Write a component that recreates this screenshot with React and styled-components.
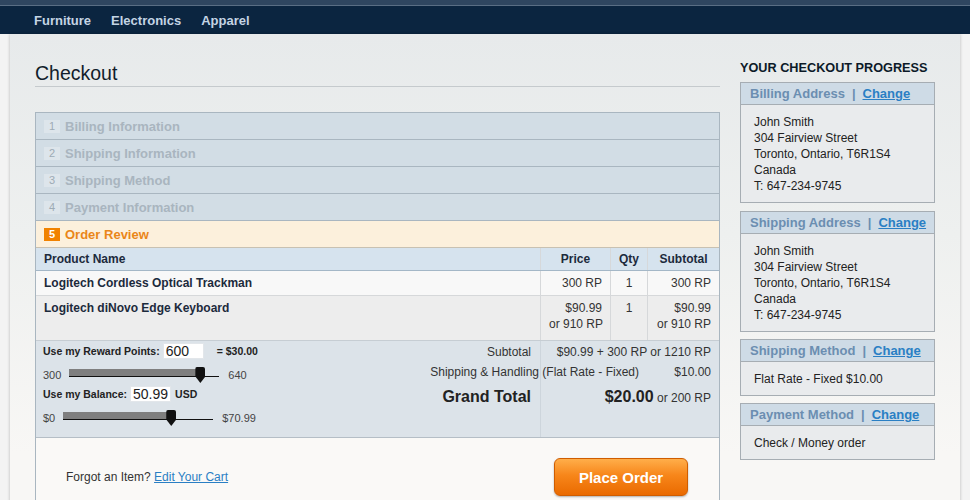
import styled, { createGlobalStyle } from "styled-components";

const GlobalStyle = createGlobalStyle`
  body {
    margin: 0;
    background: #f3f3f3;
    font-family: "Liberation Sans", Arial, sans-serif;
  }
`;

const TopStrip = styled.div`
  height: 5px;
  background: #2f4660;
  border-bottom: 1px solid #5a6e84;
`;

const NavBar = styled.div`
  background: #0b2540;
`;

const NavInner = styled.nav`
  width: 926px;
  height: 28px;
  margin: 0 auto;
  padding-left: 24px;
  display: flex;
  align-items: center;
  gap: 20px;
`;

const NavLink = styled.a`
  color: #c4d4e4;
  font-size: 13px;
  font-weight: bold;
  text-decoration: none;
`;

const Page = styled.div`
  width: 900px;
  min-height: 466px;
  margin: 0 auto;
  padding: 0 25px;
  display: flex;
  gap: 20px;
  background: linear-gradient(to bottom, #e7eaeb 0, #eef0ef 200px, #f8f7f5 420px);
  box-shadow: 0 0 3px rgba(0, 0, 0, 0.25);
`;

const Main = styled.div`
  width: 685px;
`;

const Title = styled.h1`
  margin: 27px 0 0;
  padding-bottom: 1px;
  font-size: 19.5px;
  line-height: 24px;
  font-weight: normal;
  color: #111d2b;
  border-bottom: 1px solid #c5cacd;
`;

const Steps = styled.div`
  margin-top: 25px;
  border: 1px solid #a9b6c0;
`;

const Step = styled.div`
  height: 26px;
  display: flex;
  align-items: center;
  gap: 5px;
  padding-left: 8px;
  background: ${(p) => (p.$active ? "#fcf0dc" : "#d2dde5")};
  border-bottom: 1px solid ${(p) => (p.$active ? "#c8c1b2" : "#a9b6c0")};
  font-size: 13px;
  font-weight: bold;
  color: ${(p) => (p.$active ? "#ea8618" : "#a9b5bf")};
`;

const StepNum = styled.span`
  width: 16px;
  height: 13px;
  display: flex;
  align-items: center;
  justify-content: center;
  font-size: 11px;
  font-weight: ${(p) => (p.$active ? "bold" : "normal")};
  background: ${(p) => (p.$active ? "#f18200" : "#dde5eb")};
  color: ${(p) => (p.$active ? "#fff" : "#9eabb5")};
`;

const Row = styled.div`
  display: grid;
  grid-template-columns: 1fr 70px 37px 72px;
  background: ${(p) => p.$bg};
  border-bottom: 1px solid ${(p) => p.$line};
  font-size: 12px;
  line-height: 16px;
`;

const Cell = styled.div`
  padding: ${(p) => (p.$tall ? "4px 8px 8px" : p.$head ? "3px 8px" : "4px 8px")};
  text-align: ${(p) => p.$align || "left"};
  white-space: nowrap;
  font-weight: ${(p) => (p.$bold ? "bold" : "normal")};
  color: ${(p) => (p.$bold ? "#1c2a3c" : "#333")};
  & + & {
    border-left: 1px solid ${(p) => (p.$head ? "#c2d1de" : "#d6d8da")};
  }
`;

const Totals = styled.div`
  height: 96px;
  display: flex;
  border-bottom: 1px solid #b5bec6;
  background: linear-gradient(
      to right,
      transparent 504px,
      #cdd5dc 504px,
      #cdd5dc 505px,
      transparent 505px
    ),
    #dce3e9;
`;

const Controls = styled.div`
  width: 373px;
  padding: 1px 0 0 7px;
`;

const ControlRow = styled.div`
  height: 18px;
  display: flex;
  align-items: center;
  margin-top: ${(p) => p.$mt || 0}px;
  font-size: 10.5px;
  font-weight: bold;
  color: #222;
`;

const Field = styled.input`
  box-sizing: border-box;
  width: 41px;
  height: 16px;
  margin-left: 3px;
  padding: 0 1px 0 2px;
  border: 1px solid #e2e6ea;
  background: #fff;
  font-family: inherit;
  font-size: 14px;
  color: #222;
  outline: none;
`;

const Suffix = styled.span`
  margin-left: ${(p) => p.$gap}px;
`;

const SliderLabel = styled.span`
  font-size: 11px;
  font-weight: normal;
  color: #444;
  margin: ${(p) => (p.$end ? "0 0 0 9px" : "0 8px 0 0")};
`;

const Track = styled.div`
  position: relative;
  width: 150px;
  height: 7px;
  margin-bottom: 4px;
  border-bottom: 1px solid #111;
`;

const Fill = styled.div`
  height: 7px;
  background: #7f7f7f;
`;

const Thumb = styled.div`
  position: absolute;
  top: -2px;
  width: 10px;
  height: 16px;
  background: #111;
  border-radius: 2px 2px 0 0;
  clip-path: polygon(0 0, 100% 0, 100% 60%, 50% 100%, 0 60%);
`;

const Summary = styled.div`
  flex: 1;
  padding: 2px 8px 0 0;
`;

const SumRow = styled.div`
  display: grid;
  grid-template-columns: 1fr ${(p) => p.$w}px;
  text-align: right;
  white-space: nowrap;
  margin-top: ${(p) => p.$mt || 0}px;
  font-size: 12px;
  line-height: ${(p) => (p.$grand ? 26 : 18)}px;
  color: #333;
`;

const GrandLabel = styled.span`
  font-size: 16px;
  font-weight: bold;
  color: #222;
`;

const GrandValue = styled.b`
  font-size: 16px;
  color: #222;
`;

const BottomBar = styled.div`
  display: flex;
  align-items: center;
  justify-content: space-between;
  padding: 20px 31px 20px 30px;
  background: #faf9f7;
`;

const Forgot = styled.span`
  font-size: 12px;
  color: #333;
`;

const TextLink = styled.a`
  color: #2a7fc4;
  text-decoration: underline;
  cursor: pointer;
`;

const OrderButton = styled.button`
  width: 134px;
  height: 38px;
  border: 1px solid #cf5d00;
  border-radius: 6px;
  background: linear-gradient(to bottom, #ffae4a 0%, #f7861a 45%, #ea6a00 100%);
  box-shadow: 0 1px 2px rgba(0, 0, 0, 0.3);
  color: #fff;
  font-family: inherit;
  font-size: 15px;
  font-weight: bold;
  cursor: pointer;
`;

const Sidebar = styled.aside`
  width: 195px;
`;

const SideTitle = styled.h2`
  margin: 25px 0 5px;
  font-size: 12.7px;
  line-height: 18px;
  font-weight: bold;
  color: #0c1a28;
`;

const Box = styled.div`
  margin-bottom: ${(p) => p.$mb || 8}px;
  border: 1px solid #a6adb3;
  background: #e9ebed;
`;

const BoxHead = styled.div`
  height: 21px;
  line-height: 21px;
  padding-left: 9px;
  background: #cedbe6;
  border-bottom: 1px solid #a6adb3;
  font-size: 13px;
  font-weight: bold;
  color: #6b8eb1;
`;

const Sep = styled.span`
  margin: 0 7px;
`;

const BoxBody = styled.div`
  padding: 9px 13px 8px;
  font-size: 12px;
  line-height: 16px;
  color: #222;
`;

const steps = [
  "Billing Information",
  "Shipping Information",
  "Shipping Method",
  "Payment Information",
];

const address = [
  "John Smith",
  "304 Fairview Street",
  "Toronto, Ontario, T6R1S4",
  "Canada",
  "T: 647-234-9745",
];

function Slider({ min, max, fill }) {
  return (
    <ControlRow $mt={6}>
      <SliderLabel>{min}</SliderLabel>
      <Track>
        <Fill style={{ width: fill }} />
        <Thumb style={{ left: fill - 5 }} />
      </Track>
      <SliderLabel $end>{max}</SliderLabel>
    </ControlRow>
  );
}

function ProgressBox({ title, lines, mb }) {
  return (
    <Box $mb={mb}>
      <BoxHead>
        {title}
        <Sep>|</Sep>
        <TextLink>Change</TextLink>
      </BoxHead>
      <BoxBody>
        {lines.map((l) => (
          <div key={l}>{l}</div>
        ))}
      </BoxBody>
    </Box>
  );
}

export default function App() {
  return (
    <>
      <GlobalStyle />
      <TopStrip />
      <NavBar>
        <NavInner>
          <NavLink>Furniture</NavLink>
          <NavLink>Electronics</NavLink>
          <NavLink>Apparel</NavLink>
        </NavInner>
      </NavBar>
      <Page>
        <Main>
          <Title>Checkout</Title>
          <Steps>
            {steps.map((s, i) => (
              <Step key={s}>
                <StepNum>{i + 1}</StepNum>
                {s}
              </Step>
            ))}
            <Step $active>
              <StepNum $active>5</StepNum>
              Order Review
            </Step>

            <Row $bg="#d6e3ee" $line="#a4b7c7">
              <Cell $head $bold>Product Name</Cell>
              <Cell $head $bold $align="center">Price</Cell>
              <Cell $head $bold $align="center">Qty</Cell>
              <Cell $head $bold $align="center">Subtotal</Cell>
            </Row>
            <Row $bg="#f8f8f8" $line="#d6d8da">
              <Cell $bold>Logitech Cordless Optical Trackman</Cell>
              <Cell $align="right">300 RP</Cell>
              <Cell $align="center">1</Cell>
              <Cell $align="right">300 RP</Cell>
            </Row>
            <Row $bg="#ededed" $line="#c6cdd3">
              <Cell $bold $tall>Logitech diNovo Edge Keyboard</Cell>
              <Cell $tall $align="right">
                $90.99
                <br />
                or 910 RP
              </Cell>
              <Cell $tall $align="center">1</Cell>
              <Cell $tall $align="right">
                $90.99
                <br />
                or 910 RP
              </Cell>
            </Row>

            <Totals>
              <Controls>
                <ControlRow>
                  Use my Reward Points:
                  <Field defaultValue="600" />
                  <Suffix $gap={13}>= $30.00</Suffix>
                </ControlRow>
                <Slider min="300" max="640" fill={131} />
                <ControlRow $mt={1}>
                  Use my Balance:
                  <Field defaultValue="50.99" />
                  <Suffix $gap={4}>USD</Suffix>
                </ControlRow>
                <Slider min="$0" max="$70.99" fill={108} />
              </Controls>
              <Summary>
                <SumRow $w={180}>
                  <span>Subtotal</span>
                  <span>$90.99 + 300 RP or 1210 RP</span>
                </SumRow>
                <SumRow $w={72} $mt={2}>
                  <span>Shipping &amp; Handling (Flat Rate - Fixed)</span>
                  <span>$10.00</span>
                </SumRow>
                <SumRow $w={180} $mt={3} $grand>
                  <GrandLabel>Grand Total</GrandLabel>
                  <span>
                    <GrandValue>$20.00</GrandValue> or 200 RP
                  </span>
                </SumRow>
              </Summary>
            </Totals>

            <BottomBar>
              <Forgot>
                Forgot an Item? <TextLink>Edit Your Cart</TextLink>
              </Forgot>
              <OrderButton>Place Order</OrderButton>
            </BottomBar>
          </Steps>
        </Main>

        <Sidebar>
          <SideTitle>YOUR CHECKOUT PROGRESS</SideTitle>
          <ProgressBox title="Billing Address" lines={address} />
          <ProgressBox title="Shipping Address" lines={address} mb={7} />
          <ProgressBox title="Shipping Method" lines={["Flat Rate - Fixed $10.00"]} mb={7} />
          <ProgressBox title="Payment Method" lines={["Check / Money order"]} />
        </Sidebar>
      </Page>
    </>
  );
}
